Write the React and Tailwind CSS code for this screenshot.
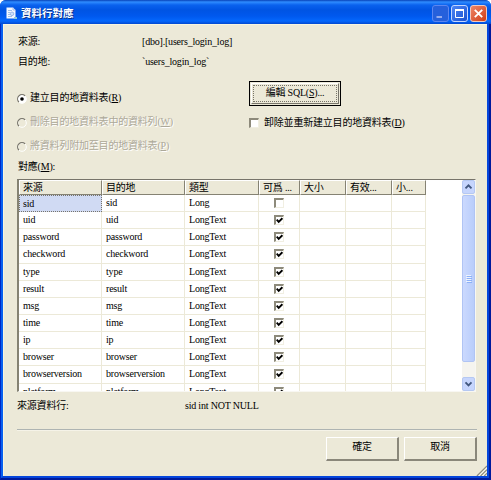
import React, { useState } from "react";

const columns = ["來源", "目的地", "類型", "可爲 ...", "大小", "有效...", "小..."];

const gridCols = "grid grid-cols-[83px_83px_74px_41px_46px_46px_34px] w-[407px]";

const initialRows = [
  { name: "sid", type: "Long", nullable: false },
  { name: "uid", type: "LongText", nullable: true },
  { name: "password", type: "LongText", nullable: true },
  { name: "checkword", type: "LongText", nullable: true },
  { name: "type", type: "LongText", nullable: true },
  { name: "result", type: "LongText", nullable: true },
  { name: "msg", type: "LongText", nullable: true },
  { name: "time", type: "LongText", nullable: true },
  { name: "ip", type: "LongText", nullable: true },
  { name: "browser", type: "LongText", nullable: true },
  { name: "browserversion", type: "LongText", nullable: true },
  { name: "platform", type: "LongText", nullable: true },
];

function CheckBox({ checked, onClick }) {
  return (
    <button
      onClick={onClick}
      className="block w-[10px] h-[10px] shrink-0 bg-white border-t-2 border-l-2 border-t-[#8d8a7b] border-l-[#8d8a7b] border-b border-r border-b-[#f1efe2] border-r-[#f1efe2]"
    >
      {checked && (
        <svg viewBox="0 0 7 7" className="block w-[7px] h-[7px]">
          <path d="M0.7 2.6 L2.7 4.9 L6.4 1.2" fill="none" stroke="#000" strokeWidth="1.9" />
        </svg>
      )}
    </button>
  );
}

function Radio({ label, hotkey, selected, disabled }) {
  return (
    <label
      className={`flex items-center h-6 ${
        disabled ? "text-[#aca899] [text-shadow:1px_1px_0_#fff]" : "text-black"
      }`}
    >
      <svg viewBox="0 0 10 10" className="w-[10px] h-[10px] mr-[3px] mt-px">
        <circle cx="5" cy="5" r="4.3" fill={disabled ? "#ece9d8" : "#fff"} stroke="#fff" />
        <path d="M1.9 8.1 A4.3 4.3 0 0 1 8.1 1.9" fill="none" stroke="#77746a" strokeWidth="1.2" />
        {selected && <circle cx="5" cy="5" r="1.8" fill="#000" />}
      </svg>
      <span>
        {label}(<u>{hotkey}</u>)
      </span>
    </label>
  );
}

function TitleBar() {
  return (
    <div className="flex items-center h-6 shrink-0 pl-[6px] pr-[4px] pt-[2px] bg-[linear-gradient(to_bottom,#0842b8_0,#2f8cff_2px,#0a62ee_5px,#0054e3_10px,#0058ee_16px,#0467fc_21px,#0348d0_24px)]">
      <svg viewBox="0 0 12 13" className="w-3 h-[13px] mr-[3px]">
        <path d="M0.5 0.5 H7 L9.5 3 V11.5 H0.5 Z" fill="#f4f7ff" />
        <path d="M7 0.5 V3 H9.5" fill="none" stroke="#8fabd8" strokeWidth="0.7" />
        <path d="M2 3.5 H6 M2 5.5 H4 M2 7.5 H4 M2 9.5 H6" stroke="#8ab0e6" strokeWidth="0.8" />
        <circle cx="6" cy="6.8" r="1.8" fill="#cfe0fa" stroke="#7ba2dc" strokeWidth="0.7" />
        <path d="M8 10 H11 V12 H8 Z" fill="#8fc9d8" />
      </svg>
      <span className="text-white font-bold text-[10.5px] tracking-normal pt-px [text-shadow:1px_1px_0_#0a2e84]">
        資料行對應
      </span>
      <div className="flex gap-[2px] ml-auto mt-[1px]">
        <div className="w-[17px] h-[17px] rounded-[3px] border border-[#5c86f0] bg-[#2560dc]">
          <svg viewBox="0 0 15 15" className="block w-full h-full">
            <path d="M3.5 11 H9" stroke="#93abef" strokeWidth="2" />
          </svg>
        </div>
        <div className="w-[17px] h-[17px] rounded-[3px] border border-[#c4d6ff] bg-linear-to-br from-[#4d86f5] to-[#1b51d0]">
          <svg viewBox="0 0 15 15" className="block w-full h-full">
            <path d="M3.5 4 H11.5 V11.5 H3.5 Z" fill="none" stroke="#fff" />
            <path d="M3 4 H12" stroke="#fff" strokeWidth="2" />
          </svg>
        </div>
        <div className="w-[17px] h-[17px] rounded-[3px] border border-[#f2c9bd] bg-linear-to-br from-[#ee8565] to-[#cf3a0c]">
          <svg viewBox="0 0 15 15" className="block w-full h-full">
            <path d="M3.8 3.8 L11.2 11.2 M11.2 3.8 L3.8 11.2" stroke="#fff" strokeWidth="1.9" />
          </svg>
        </div>
      </div>
    </div>
  );
}

function ScrollArrow({ down }) {
  return (
    <div className="w-[13px] h-[14px] shrink-0 rounded-[2px] border border-[#b5c8f2] bg-[#c6d5fd]">
      <svg viewBox="0 0 11 12" className="block w-full h-full">
        <path
          d={down ? "M2.5 4.3 L5.5 7.3 L8.5 4.3" : "M2.5 7.3 L5.5 4.3 L8.5 7.3"}
          fill="none"
          stroke="#42577f"
          strokeWidth="1.9"
        />
      </svg>
    </div>
  );
}

function MappingTable() {
  const [rows, setRows] = useState(initialRows);

  const toggleNullable = (name) => {
    setRows((prev) =>
      prev.map((row) => (row.name === name ? { ...row, nullable: !row.nullable } : row))
    );
  };

  const cell = "flex items-center pl-[4px] border-r border-b border-[#ece9d8] overflow-hidden";

  return (
    <div className="flex w-[459px] h-[213px] bg-white border-t border-l-2 border-r border-b border-t-[#77746a] border-l-[#858273] border-r-[#f8f7f2] border-b-[#f8f7f2]">
      <div className="flex-1 overflow-hidden">
        <div className={`${gridCols} h-[15px]`}>
          {columns.map((title) => (
            <div
              key={title}
              className="flex items-center pl-[3px] bg-[#ece9d8] border-t border-l border-t-white border-l-white border-r border-b border-r-[#858273] border-b-[#858273] whitespace-nowrap"
            >
              {title}
            </div>
          ))}
        </div>
        {rows.map((row, i) => (
          <div key={row.name} className={`${gridCols} h-[17.15px]`}>
            <div
              className={
                i === 0
                  ? "flex items-center pl-[3px] bg-[#d0daf3] border border-dotted border-[#77746a]"
                  : cell
              }
            >
              {row.name}
            </div>
            <div className={cell}>{row.name}</div>
            <div className={cell}>{row.type}</div>
            <div className="flex items-center justify-center border-r border-b border-[#ece9d8]">
              <CheckBox checked={row.nullable} onClick={() => toggleNullable(row.name)} />
            </div>
            <div className={cell} />
            <div className={cell} />
            <div className={cell} />
          </div>
        ))}
      </div>
      <div className="flex flex-col w-[13px] bg-[#f5f4ef]">
        <ScrollArrow />
        <div className="flex items-center justify-center h-[167px] mt-px rounded-[2px] border border-[#b0c4f4] bg-linear-to-r from-[#cbd9fe] to-[#b9cdfb]">
          <svg viewBox="0 0 6 8" className="w-[6px] h-2">
            <path d="M0 0.5 H5 M0 2.5 H5 M0 4.5 H5 M0 6.5 H5" stroke="#eef4fe" />
            <path d="M1 1.5 H6 M1 3.5 H6 M1 5.5 H6 M1 7.5 H6" stroke="#8cb0f8" />
          </svg>
        </div>
        <div className="flex-1" />
        <ScrollArrow down />
      </div>
    </div>
  );
}

function DialogButton({ children }) {
  return (
    <button className="w-[73px] h-6 pb-[3px] border-t border-l border-t-white border-l-white border-r-2 border-b-2 border-r-[#8a877a] border-b-[#8a877a]">
      {children}
    </button>
  );
}

function App() {
  return (
    <div className="bg-white w-[491px] h-[480px]">
      <div className="flex flex-col w-[491px] h-[480px] rounded-t-[6px] overflow-hidden bg-[#0046d8] text-[10px] leading-[12px] tracking-[-0.2px] text-black font-['Liberation_Serif','Noto_Sans_CJK_TC',serif]">
        <TitleBar />
        <div className="flex-1 flex flex-col border-l border-r-2 border-b-2 border-l-[#0028c4] border-r-[#001a9c] border-b-[#001a9c]">
          <div className="flex-1 flex flex-col border-l-2 border-r-2 border-b-2 border-l-[#0860f0] border-r-[#0445dc] border-b-[#0445dc]">
            <div className="flex-1 flex flex-col pl-[13px] bg-[#ece9d8] border-l border-t border-[#f8f5df]">
              <div className="grid grid-cols-[124px_1fr] pl-px pt-[11px] gap-y-[8px]">
                <div>來源:</div>
                <div>[dbo].[users_login_log]</div>
                <div>目的地:</div>
                <div>`users_login_log`</div>
              </div>

              <div className="flex h-[73px] mt-[13px]">
                <div className="w-[232px] pt-[5px]">
                  <Radio label="建立目的地資料表" hotkey="R" selected />
                  <Radio label="刪除目的地資料表中的資料列" hotkey="W" disabled />
                  <Radio label="將資料列附加至目的地資料表" hotkey="P" disabled />
                </div>
                <div>
                  <button className="block w-[92px] h-[25px] p-px border border-black">
                    <span className="block h-full p-px border-t border-l border-t-white border-l-white border-r border-b border-r-[#77746a] border-b-[#77746a]">
                      <span className="block h-full leading-[13px] border border-dotted border-[#77746a]">
                        編輯 SQL(<u>S</u>)...
                      </span>
                    </span>
                  </button>
                  <div className="flex items-center mt-[11px]">
                    <CheckBox />
                    <span className="ml-[5px]">
                      卸除並重新建立目的地資料表(<u>D</u>)
                    </span>
                  </div>
                </div>
              </div>

              <div className="mt-[7px] mb-[6px] pl-px">
                對應(<u>M</u>):
              </div>
              <MappingTable />

              <div className="grid grid-cols-[168px_1fr] mt-[8px]">
                <div>來源資料行:</div>
                <div>sid int NOT NULL</div>
              </div>
              <div className="w-[460px] mt-[17px] border-t border-b border-t-[#aeb4b2] border-b-[#f5f3e8]" />
              <div className="flex justify-end gap-[5px] mt-[6px] pr-[10px]">
                <DialogButton>確定</DialogButton>
                <DialogButton>取消</DialogButton>
              </div>
              <svg viewBox="0 0 12 12" className="w-[11px] h-[11px] mt-auto ml-auto">
                <path d="M1 12 L12 1 M5 12 L12 5 M9 12 L12 9" stroke="#8f8c7e" strokeWidth="1.3" />
                <path d="M3 12 L12 3 M7 12 L12 7" stroke="#fff" strokeWidth="0.8" />
              </svg>
            </div>
          </div>
        </div>
      </div>
    </div>
  );
}

export default App;
